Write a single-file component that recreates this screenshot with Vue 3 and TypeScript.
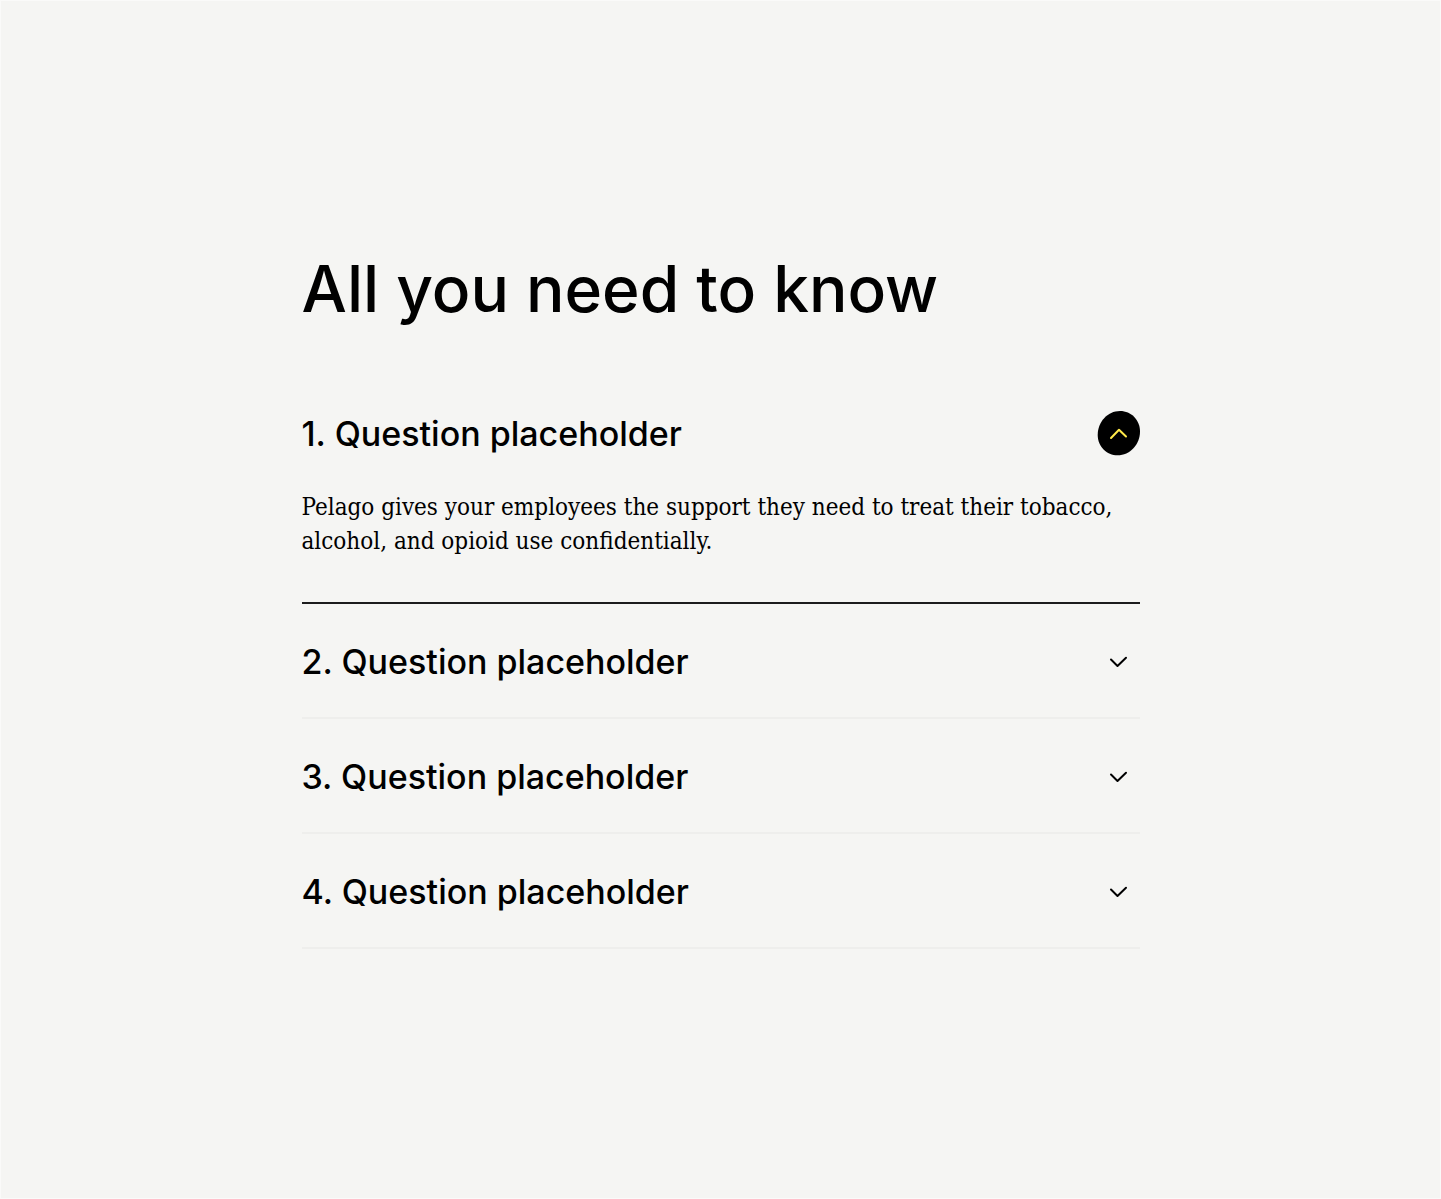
<script setup lang="ts">
import { ref } from 'vue'

interface Question {
  id: number
  title: string
  answer: string
}

const answer =
  'Pelago gives your employees the support they need to treat their tobacco, alcohol, and opioid use confidentially.'

const questions: Question[] = [1, 2, 3, 4].map((id) => ({
  id,
  title: `${id}. Question placeholder`,
  answer,
}))

const openId = ref<number | null>(1)

function toggle(id: number) {
  openId.value = openId.value === id ? null : id
}
</script>

<template>
  <main class="page">
    <section class="faq">
      <h1 class="heading">All you need to know</h1>
      <div
        v-for="q in questions"
        :key="q.id"
        class="item"
        :class="{ open: openId === q.id }"
      >
        <h2 class="item-head">
          <button
            type="button"
            class="trigger"
            :aria-expanded="openId === q.id"
            :aria-controls="`answer-${q.id}`"
            @click="toggle(q.id)"
          >
            <span class="title">{{ q.title }}</span>
            <svg class="icon" viewBox="0 0 42 44" aria-hidden="true">
              <template v-if="openId === q.id">
                <path
                  d="M22 0C33.300 0 42 9 42 20.500C42 33.500 32 44.300 19.500 44.300C8.700 44.300 -0.300 35.500 -0.300 24C-0.300 11 9.500 0 22 0Z"
                  fill="#000"
                />
                <path class="chevron lit" d="M13 27L21 18.800L28 25.500" />
              </template>
              <path v-else class="chevron" d="M13 20.500L19.500 27L28 18.800" />
            </svg>
          </button>
        </h2>
        <p v-if="openId === q.id" :id="`answer-${q.id}`" class="answer">{{ q.answer }}</p>
      </div>
    </section>
  </main>
</template>

<style>
body {
  background: #f5f5f3;
}
</style>

<style scoped>
.page {
  box-sizing: border-box;
  min-height: 100vh;
  padding: 248px 24px;
  border: 1px solid #fafaf9;
  background: #f5f5f3;
  color: #000;
}

.faq {
  max-width: 838px;
  margin: 0 auto;
}

.heading {
  margin: 0 0 47px;
  font: 500 64px/80px Inter, sans-serif;
}

.item {
  border-bottom: 2px solid #eeeeec;
}

.item.open {
  border-color: #1c1c1c;
}

.item-head {
  margin: 0;
}

.trigger {
  display: flex;
  align-items: center;
  justify-content: space-between;
  width: 100%;
  height: 113px;
  padding: 0;
  border: 0;
  background: none;
  color: inherit;
  font: 500 34px/44px Inter, sans-serif;
  text-align: left;
  cursor: pointer;
}

.title {
  padding-top: 3px;
}

.icon {
  width: 42px;
  height: 44px;
  overflow: visible;
}

.chevron {
  fill: none;
  stroke: #000;
  stroke-width: 2;
  stroke-linecap: round;
  stroke-linejoin: round;
}

.chevron.lit {
  stroke: #ffe94a;
}

.answer {
  margin: 0;
  padding: 1px 0 44px;
  font: 400 24px/34px "DejaVu Serif Condensed", "DejaVu Serif", serif;
}
</style>
